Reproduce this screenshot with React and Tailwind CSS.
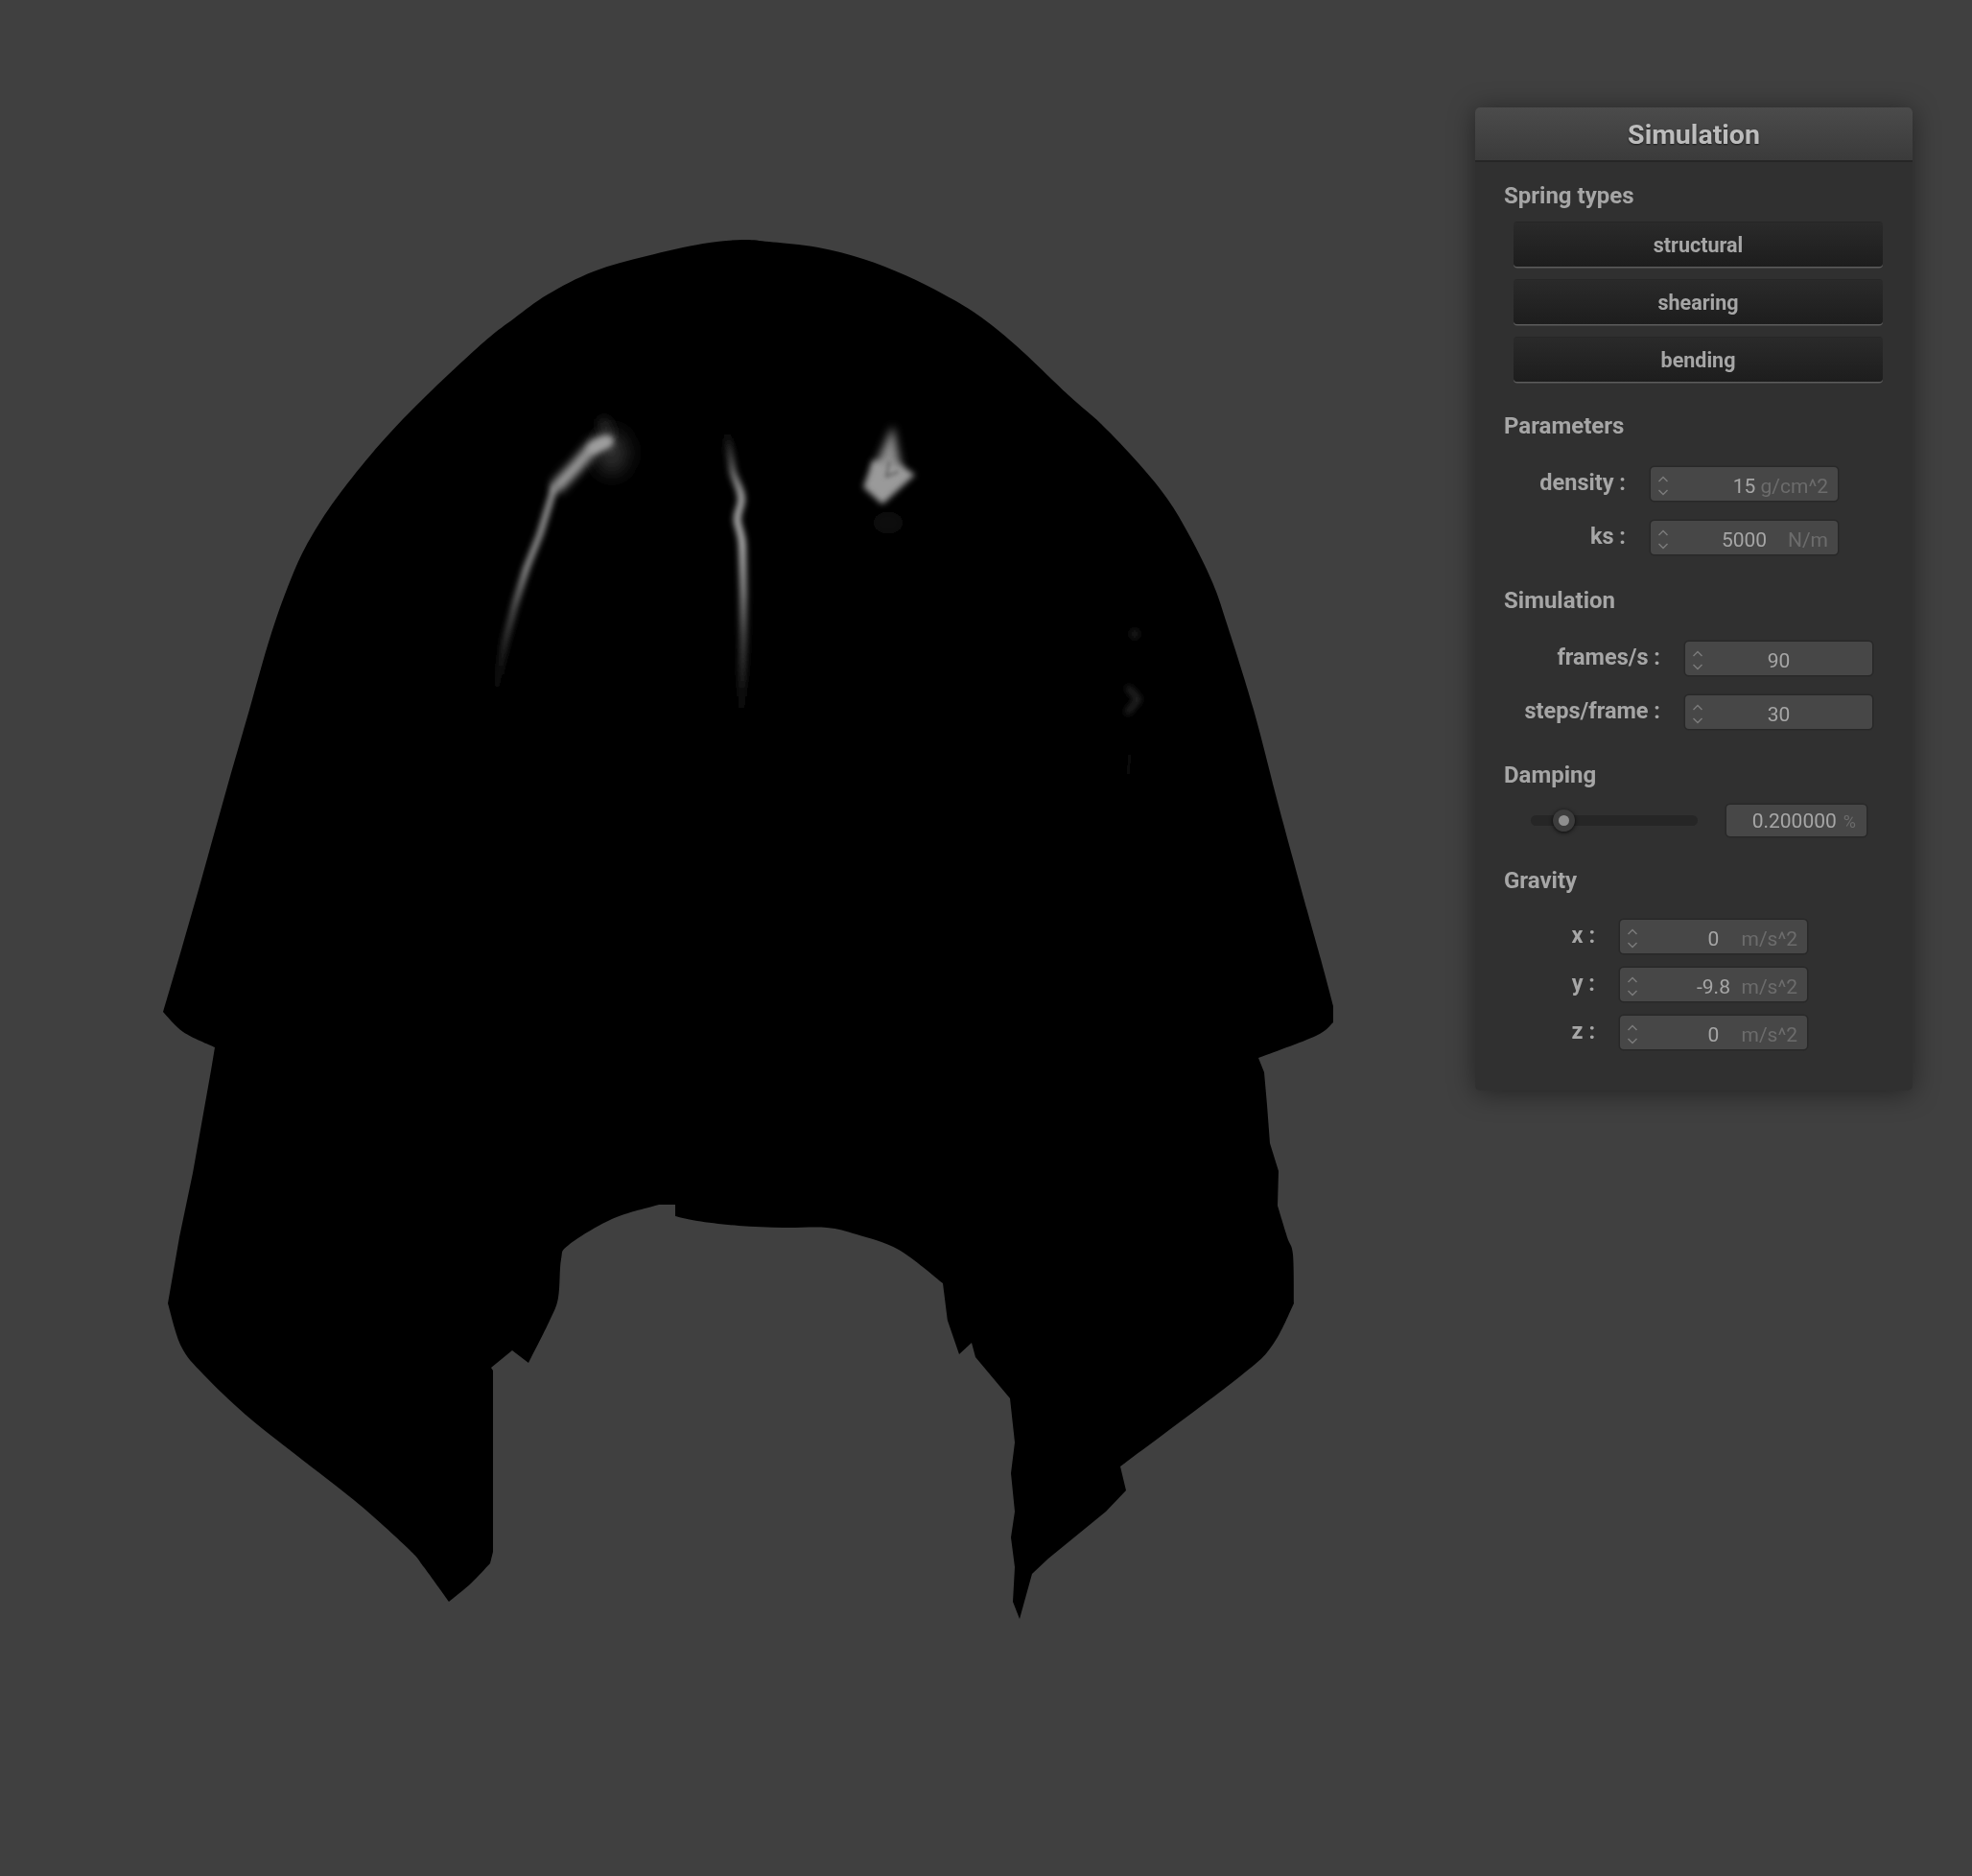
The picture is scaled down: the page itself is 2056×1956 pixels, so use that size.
import React from "react";

const RUNS = [
  { smooth: true, p: "170,1055 190,987 210,917 237,820 260,740 283,660 306,597 326,557 354,515 397,462 445,412 504,357 536,332 571,307 619,283 674,267 733,254 774,250 802,252 853,258 900,270 944,287 984,307 1019,328 1059,360 1114,412 1148,442 1187,483 1217,520 1241,560 1264,607 1279,650 1307,740 1333,840 1363,950 1377,1000 1390,1049" },
  { smooth: false, p: "1390,1049 1390,1066" },
  { smooth: true, p: "1390,1066 1372,1080 1312,1103" },
  { smooth: false, p: "1312,1103 1318,1118 1321,1152 1324,1192 1333,1221 1332,1257" },
  { smooth: true, p: "1332,1257 1342,1290 1348,1308 1349,1359" },
  { smooth: true, p: "1349,1359 1327,1402 1293,1435 1168,1529" },
  { smooth: false, p: "1168,1529 1174,1554 1153,1576 1093,1625 1076,1641 1063,1688 1056,1670 1058,1634 1054,1603 1058,1576 1054,1536 1058,1504 1053,1458 1017,1415 1013,1400 1000,1412 988,1377" },
  { smooth: true, p: "988,1377 983,1338" },
  { smooth: true, p: "983,1338 937,1303 893,1287 862,1280 817,1280 770,1278 727,1273 704,1268" },
  { smooth: false, p: "704,1268 704,1256 687,1256" },
  { smooth: true, p: "687,1256 638,1271 593,1298 585,1313 582,1353 573,1377 551,1421" },
  { smooth: false, p: "551,1421 534,1408 512,1426 514,1429 514,1618 511,1630" },
  { smooth: true, p: "511,1630 492,1650 468,1670" },
  { smooth: true, p: "468,1670 442,1634 427,1616 375,1569 310,1518 256,1475 212,1433 189,1404 175,1359" },
  { smooth: false, p: "175,1359 187,1290 201,1223 220,1116 224,1092" },
  { smooth: true, p: "224,1092 191,1076 170,1055" },
];

function buildOutline() {
  let d = "";
  RUNS.forEach((run, ri) => {
    const pts = run.p.split(" ").map((s) => s.split(",").map(Number));
    if (ri === 0) d += `M${pts[0][0]} ${pts[0][1]}`;
    for (let i = 0; i < pts.length - 1; i++) {
      if (!run.smooth) {
        d += `L${pts[i + 1][0]} ${pts[i + 1][1]}`;
      } else {
        const p0 = pts[Math.max(i - 1, 0)];
        const p1 = pts[i];
        const p2 = pts[i + 1];
        const p3 = pts[Math.min(i + 2, pts.length - 1)];
        const c1x = p1[0] + (p2[0] - p0[0]) / 6;
        const c1y = p1[1] + (p2[1] - p0[1]) / 6;
        const c2x = p2[0] - (p3[0] - p1[0]) / 6;
        const c2y = p2[1] - (p3[1] - p1[1]) / 6;
        d += `C${c1x} ${c1y} ${c2x} ${c2y} ${p2[0]} ${p2[1]}`;
      }
    }
  });
  return d + "Z";
}

function Blur({ id, amount }) {
  return (
    <filter id={id} filterUnits="userSpaceOnUse" x="0" y="0" width="2056" height="1956">
      <feGaussianBlur stdDeviation={amount} />
    </filter>
  );
}

function VGrad({ id, y1, y2, stops }) {
  return (
    <linearGradient id={id} gradientUnits="userSpaceOnUse" x1="0" x2="0" y1={y1} y2={y2}>
      {stops.map(([o, c]) => (
        <stop key={o} offset={o} stopColor={c} />
      ))}
    </linearGradient>
  );
}

function ClothRender() {
  return (
    <svg className="absolute inset-0" width="2056" height="1956" viewBox="0 0 2056 1956">
      <defs>
        <Blur id="b1" amount="2" />
        <Blur id="b2" amount="3.4" />
        <Blur id="b3" amount="5" />
        <Blur id="b4" amount="10" />
        <VGrad id="leftLine" y1="505" y2="725" stops={[[0, "#a8a8a8"], [0.4, "#a0a0a0"], [0.6, "#585858"], [0.8, "#242424"], [1, "#000"]]} />
        <VGrad id="midLine" y1="450" y2="745" stops={[[0, "#000"], [0.12, "#585858"], [0.22, "#b0b0b0"], [0.4, "#c0c0c0"], [0.56, "#909090"], [0.73, "#484848"], [1, "#000"]]} />
      </defs>
      <path d={buildOutline()} fill="#000" />
      <g fill="none" strokeLinecap="round" strokeLinejoin="round">
        {/* left streak */}
        <ellipse cx="638" cy="472" rx="16" ry="22" fill="#303030" filter="url(#b4)" />
        <path d="M630 442 L634 452" stroke="#202020" strokeWidth="14" filter="url(#b3)" />
        <path d="M632 460 L620 464 L600 487 L582 506" stroke="#a0a0a0" strokeWidth="13" filter="url(#b3)" />
        <path d="M634 460 L618 468" stroke="#a0a0a0" strokeWidth="9" filter="url(#b2)" />
        <path d="M578 508 L563 557 L549 592 L537 630 L527 668 L516 725" stroke="url(#leftLine)" strokeWidth="6" filter="url(#b2)" />
        {/* centre streak */}
        <path d="M758 450 L764 492 C768 505 774 512 773 522 C772 532 767 535 769 545 C771 553 774 560 774 570 L775 617 L775 667 L773 745" stroke="url(#midLine)" strokeWidth="7" filter="url(#b2)" />
        {/* diamond */}
        <polygon points="931,444 940,490 910,490" fill="#8c8c8c" stroke="none" filter="url(#b3)" />
        <polygon points="910,480 938,484 954,495 920,526 900,508" fill="#9a9a9a" stroke="none" filter="url(#b2)" />
        <path d="M927 482 L924 497 L936 492" stroke="#666" strokeWidth="2.5" filter="url(#b1)" />
        <ellipse cx="926" cy="545" rx="16" ry="12" fill="#070707" stroke="none" filter="url(#b3)" />
        <path d="M936 575 L925 604" stroke="#060606" strokeWidth="4" filter="url(#b2)" />
        {/* faint marks on the right */}
        <circle cx="1183" cy="661" r="5" fill="#1a1a1a" stroke="none" filter="url(#b2)" />
        <path d="M1177 718 L1187 729 L1176 742" stroke="#262626" strokeWidth="6" filter="url(#b2)" />
        <path d="M1178 786 L1176 808" stroke="#0c0c0c" strokeWidth="5" filter="url(#b2)" />
      </g>
    </svg>
  );
}

function Spin() {
  return (
    <svg width="12" height="24" viewBox="0 0 12 24" className="ml-[7px] shrink-0" fill="none" stroke="#7c7c7c" strokeWidth="1.4">
      <path d="M1.5 8 L6 3.5 L10.5 8" />
      <path d="M1.5 17 L6 21.5 L10.5 17" />
    </svg>
  );
}

function Heading({ children, className = "" }) {
  return (
    <div className={"h-[28px] leading-[28px] text-[24px] font-bold text-[#a6a6a6] " + className}>
      {children}
    </div>
  );
}

function NumberBox({ value, unit }) {
  return (
    <div className="grid grid-cols-[minmax(0,1fr)_auto_minmax(0,1fr)] items-center w-[195px] h-[35px] rounded-[4px] bg-[#474747] shadow-[0_0_0_1.5px_#282828] text-[21px] font-normal">
      <Spin />
      <span className="text-[#a6a6a6] leading-[35px] pt-[3px]">{value}</span>
      <span className="text-right pr-[10px] text-[#6c6c6c] leading-[35px] pt-[3px] whitespace-nowrap">{unit}</span>
    </div>
  );
}

function Field({ label, labelWidth, value, unit, className = "" }) {
  return (
    <div className={"flex items-center " + className}>
      <div
        className="text-right text-[23.5px] font-bold text-[#a6a6a6] whitespace-nowrap mr-[26px] -mt-[1px]"
        style={{ width: labelWidth + 1 }}
      >
        {label}
      </div>
      <NumberBox value={value} unit={unit} />
    </div>
  );
}

function Toggle({ children, className = "" }) {
  return (
    <div className={"ml-[10px] w-[385px] h-[46px] pt-[3px] rounded-[4px] flex items-center justify-center bg-gradient-to-b from-[#2a2a2a] to-[#1d1d1d] shadow-[0_1.5px_0_#5c5c5c,0_-1px_0_#262626] text-[21.5px] font-bold text-[#a6a6a6] " + className}>
      {children}
    </div>
  );
}

function Panel() {
  return (
    <div className="absolute left-[1538px] top-[112px] w-[456px] rounded-[5px] bg-[#303030] shadow-[0_3px_28px_rgba(0,0,0,0.45)] [font-family:Roboto,'Liberation_Sans',sans-serif] blur-[0.6px]">
      <div className="h-[57px] pt-[3px] rounded-t-[5px] bg-gradient-to-b from-[#4b4b4b] to-[#3b3b3b] border-b-2 border-[#262626] flex items-center justify-center text-[28.5px] font-bold text-[#bcbcbc] [text-shadow:0_1px_2px_rgba(0,0,0,0.6)]">
        Simulation
      </div>
      <div className="pl-[30px] pt-[21px] pb-[43px]">
        <Heading className="mb-[14px]">Spring types</Heading>
        <Toggle className="mb-[14px]">structural</Toggle>
        <Toggle className="mb-[14px]">shearing</Toggle>
        <Toggle>bending</Toggle>

        <Heading className="mt-[32px] mb-[29px]">Parameters</Heading>
        <Field label="density :" labelWidth={126} value="15" unit="g/cm^2" className="mb-[21px]" />
        <Field label="ks :" labelWidth={126} value="5000" unit="N/m" />

        <Heading className="mt-[34px] mb-[29px]">Simulation</Heading>
        <Field label="frames/s :" labelWidth={162} value="90" unit="" className="mb-[21px]" />
        <Field label="steps/frame :" labelWidth={162} value="30" unit="" />

        <Heading className="mt-[34px] mb-[17px]">Damping</Heading>
        <div className="flex items-center h-[33px]">
          <div className="relative ml-[28px] w-[174px] h-[11px] rounded-full bg-[#262626]">
            <div className="absolute left-[23px] -top-[6px] w-[23px] h-[23px] rounded-full bg-[#3c3c3c] shadow-[0_1px_4px_rgba(0,0,0,0.8)] flex items-center justify-center">
              <div className="w-[11px] h-[11px] rounded-full bg-[#8e8e8e]" />
            </div>
          </div>
          <div className="ml-[30px] w-[146px] h-[33px] rounded-[4px] bg-[#474747] shadow-[0_0_0_1.5px_#282828] flex items-center justify-end pr-[11px] pt-[2px] text-[21px]">
            <span className="text-[#a6a6a6]">0.200000</span>
            <span className="text-[#6c6c6c] ml-[7px] text-[18px]">%</span>
          </div>
        </div>

        <Heading className="mt-[32px] mb-[27px]">Gravity</Heading>
        <Field label="x :" labelWidth={94} value="0" unit="m/s^2" className="mb-[15px]" />
        <Field label="y :" labelWidth={94} value="-9.8" unit="m/s^2" className="mb-[15px]" />
        <Field label="z :" labelWidth={94} value="0" unit="m/s^2" />
      </div>
    </div>
  );
}

export default function App() {
  return (
    <div className="relative w-[2056px] h-[1956px] bg-[#404040] overflow-hidden">
      <ClothRender />
      <Panel />
    </div>
  );
}
